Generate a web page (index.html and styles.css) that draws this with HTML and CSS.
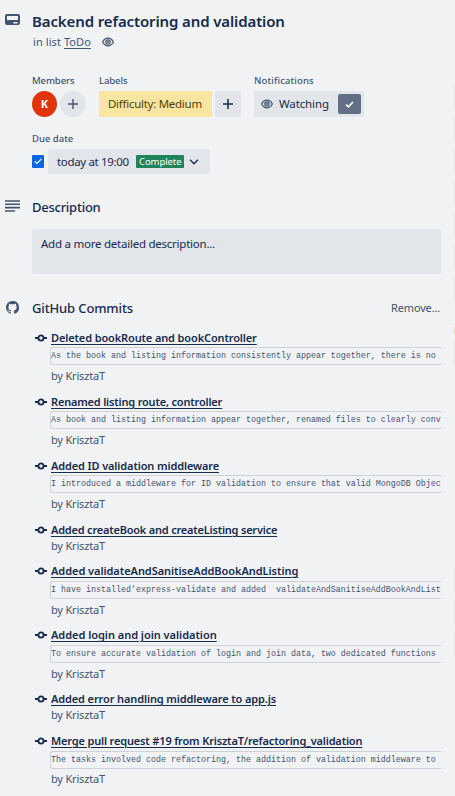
FILE: index.html
```html
<!DOCTYPE html>
<html lang="en">
<head>
<meta charset="utf-8">
<title>Backend refactoring and validation</title>
<link rel="stylesheet" href="styles.css">
</head>
<body>
<svg class="defs" width="0" height="0">
<symbol id="eye" viewBox="0 0 12 10"><path d="M.6 5C3.2-.1 8.8-.1 11.4 5 8.8 10.1 3.2 10.1.6 5Z"/><circle cx="6" cy="5" r="2.2"/><circle cx="6" cy="5" r=".4"/></symbol>
<symbol id="commit" viewBox="0 0 12 8"><path d="M0 4h3.200M8.800 4H12"/><circle cx="6" cy="4" r="2.600"/></symbol>
<symbol id="plus" viewBox="0 0 12 12"><path d="M6 1v10M1 6h10"/></symbol>
</svg>
<main class="card">
<header class="section head">
<svg class="icon" width="16" height="12" viewBox="0 0 16 12"><path fill="#44546f" fill-rule="evenodd" d="M2 0h11a2 2 0 0 1 2 2v7a2 2 0 0 1-2 2H2a2 2 0 0 1-2-2V2a2 2 0 0 1 2-2Zm0 2v4h11V2ZM8.500 8v1.500h4V8Z"/></svg>
<div><h1><span>Backend refactoring and validation</span></h1>
<div class="list"><span class="inlist">in list <u>ToDo</u></span><svg class="line" width="12" height="10"><use href="#eye"/></svg></div></div>
</header>
<div class="fields">
<div class="field members"><h3>Members</h3><div class="row"><span class="avatar">K</span><span class="round"><svg class="line" width="12" height="12"><use href="#plus"/></svg></span></div></div>
<div class="field labels"><h3>Labels</h3><div class="row"><span class="label"><span>Difficulty: Medium</span></span><span class="add"><svg class="line dark" width="12" height="12"><use href="#plus"/></svg></span></div></div>
<div class="field"><h3 class="notif">Notifications</h3><div class="watch"><svg class="line" width="12" height="10"><use href="#eye"/></svg><span class="watching">Watching</span><span class="on"><svg width="9" height="7" viewBox="0 0 9 7"><path d="M1 3.500l2.300 2.300L8 1" fill="none" stroke="#fff" stroke-width="1.600"/></svg></span></div></div>
</div>
<div class="due"><h3 class="duelabel">Due date</h3><div class="duerow"><span class="check"><svg width="8" height="7" viewBox="0 0 8 7"><path d="M.7 3.300l2.200 2.200L7.400 1" fill="none" stroke="#fff" stroke-width="1.100"/></svg></span><div class="date"><span class="time">today at 19:00</span><span class="done"><span>Complete</span></span><svg width="10" height="6" viewBox="0 0 10 6"><path d="M1 .8l4 4 4-4" fill="none" stroke="#172b4d" stroke-width="1.300"/></svg></div></div></div>
<section class="section desc">
<svg class="icon" width="15" height="12" viewBox="0 0 15 12"><path d="M0 1h15M0 4.300h15M0 7.600h15M0 11h10" stroke="#44546f" stroke-width="1.600"/></svg>
<div><h2 class="desctitle"><span>Description</span></h2><div class="box"><span>Add a more detailed description...</span></div></div>
</section>
<section class="section github">
<svg class="icon" width="13" height="13" viewBox="0 0 16 16"><path fill="#44546f" d="M8 0C3.580 0 0 3.580 0 8c0 3.540 2.290 6.530 5.470 7.590.4.070.55-.17.55-.38 0-.19-.01-.82-.01-1.490-2.010.37-2.530-.49-2.690-.94-.09-.23-.48-.94-.82-1.130-.28-.15-.68-.52-.01-.53.63-.01 1.080.58 1.230.82.72 1.210 1.870.87 2.330.66.070-.52.28-.87.51-1.070-1.780-.2-3.640-.89-3.640-3.950 0-.87.31-1.590.82-2.150-.08-.2-.36-1.020.08-2.120 0 0 .67-.21 2.200.82a7.600 7.600 0 0 1 4 0c1.530-1.040 2.200-.82 2.200-.82.44 1.100.16 1.920.08 2.120.51.56.82 1.270.82 2.150 0 3.070-1.870 3.750-3.650 3.950.29.25.54.73.54 1.480 0 1.070-.01 1.930-.01 2.200 0 .21.15.46.55.38A8 8 0 0 0 8 0Z"/></svg>
<div class="ghhead"><h2 class="ghtitle"><span>GitHub Commits</span></h2><span class="remove">Remove...</span></div>
</section>
<ul class="commits">
<li><svg class="node" width="12" height="8"><use href="#commit"/></svg><div><a class="c1">Deleted bookRoute and bookController</a><pre>As the book and listing information consistently appear together, there is no </pre><p><span>by KrisztaT</span></p></div></li>
<li><svg class="node" width="12" height="8"><use href="#commit"/></svg><div><a class="c2">Renamed listing route, controller</a><pre>As book and listing information appear together, renamed files to clearly conv</pre><p><span>by KrisztaT</span></p></div></li>
<li><svg class="node" width="12" height="8"><use href="#commit"/></svg><div><a class="c3">Added ID validation middleware</a><pre>I introduced a middleware for ID validation to ensure that valid MongoDB Objec</pre><p><span>by KrisztaT</span></p></div></li>
<li class="short"><svg class="node" width="12" height="8"><use href="#commit"/></svg><div><a class="c4">Added createBook and createListing service</a><p><span>by KrisztaT</span></p></div></li>
<li class="spaced"><svg class="node" width="12" height="8"><use href="#commit"/></svg><div><a class="c5">Added validateAndSanitiseAddBookAndListing</a><pre>I have installed'express-validate and added  validateAndSanitiseAddBookAndList</pre><p><span>by KrisztaT</span></p></div></li>
<li class="spaced"><svg class="node" width="12" height="8"><use href="#commit"/></svg><div><a class="c6">Added login and join validation</a><pre>To ensure accurate validation of login and join data, two dedicated functions </pre><p><span>by KrisztaT</span></p></div></li>
<li class="short tall"><svg class="node" width="12" height="8"><use href="#commit"/></svg><div><a class="c7">Added error handling middleware to app.js</a><p><span>by KrisztaT</span></p></div></li>
<li class="spaced last"><svg class="node" width="12" height="8"><use href="#commit"/></svg><div><a class="c8">Merge pull request #19 from KrisztaT/refactoring_validation</a><pre>The tasks involved code refactoring, the addition of validation middleware to </pre><p><span>by KrisztaT</span></p></div></li>
</ul>
</main>
<aside class="edge"><i></i><i></i><i></i><i></i><i></i><i></i><i></i><b></b><i></i><i class="low"></i><i></i><i></i></aside>
</body>
</html>
```

FILE: styles.css
```css
* { box-sizing: border-box; margin: 0; padding: 0; }
body { width: 455px; height: 796px; overflow: hidden; position: relative; background: #f1f2f4; color: #172b4d; font: 11.5px/16px "Noto Sans", "Open Sans", sans-serif; white-space: nowrap; }
svg { display: block; flex: none; }
.defs { position: absolute; }
.line { fill: none; stroke: #44546f; stroke-width: 1.2; }
.dark { stroke: #172b4d; stroke-width: 1.5; }
.round .line { stroke-width: 1.4; }
.card { padding: 11px 14px 0 5px; }
.section { display: grid; grid-template-columns: 27px 1fr; }
.icon { margin-top: 3px; }
.head { height: 64px; }
h1 { font-size: 15px; line-height: 20px; font-weight: 600; letter-spacing: -.12px; }
h2 { font-size: 13px; line-height: 20px; font-weight: 500; }
h3 { font-size: 9.5px; line-height: 12px; font-weight: 500; color: #44546f; letter-spacing: -.1px; }
.notif { letter-spacing: .14px; }
.list { display: flex; align-items: center; gap: 11px; color: #44546f; margin: 3px 0 0 1px; font-size: 11px; }
.inlist { letter-spacing: .08px; }
u { text-underline-offset: 2px; }
.fields { display: flex; margin-left: 27px; height: 58px; }
.field h3 { margin-bottom: 4px; }
.members { width: 67px; }
.labels { width: 155px; }
.row { display: flex; gap: 3px; }
.avatar, .round { width: 26px; height: 26px; border-radius: 50%; display: grid; place-items: center; background: #e2e5ea; }
.avatar { width: 25px; background: #de350b; color: #fff; font-weight: 700; font-size: 11px; }
.label { width: 113px; height: 26px; padding-left: 9px; line-height: 26px; background: #f8e6a0; color: #533f04; border-radius: 2px; letter-spacing: -.27px; }
.add { width: 26px; height: 26px; border-radius: 2px; background: #e2e5ea; display: grid; place-items: center; }
.watch { width: 110px; height: 26px; display: flex; align-items: center; background: #e2e5ea; border-radius: 2px; padding: 0 3px 0 7px; }
.watching { margin-left: 6px; letter-spacing: -.12px; }
.on { width: 23px; height: 20px; display: grid; place-items: center; border-radius: 2px; background: #626f86; margin-left: auto; }
.due { margin-left: 27px; height: 65px; }
.duelabel { letter-spacing: 0; }
.duerow { display: flex; align-items: center; gap: 4px; margin-top: 4px; }
.check { width: 12px; height: 13px; border-radius: 1px; background: #0c66e4; display: grid; place-items: center; }
.date { width: 162px; height: 25px; display: flex; align-items: center; background: #e2e5ea; border-radius: 2px; padding-left: 9px; }
.time { width: 79px; letter-spacing: -.34px; }
.done { width: 48px; height: 13px; line-height: 14px; background: #1f845a; color: #fff; border-radius: 1px; padding-left: 3px; font-size: 9.5px; margin-right: 5px; letter-spacing: -.08px; }
.desc { height: 100px; }
.desctitle { height: 20px; line-height: 18px; letter-spacing: -.26px; }
.desc .icon { margin-top: 2px; }
.box { height: 45px; margin-top: 11px; padding: 7px 9px; background: #e2e5ea; border-radius: 2px; letter-spacing: -.24px; }
.github { height: 32px; }
.github .icon { margin-left: 1px; }
.ghhead { display: flex; justify-content: space-between; align-items: center; height: 20px; }
.ghtitle { letter-spacing: -.14px; }
.remove { color: #44546f; margin-right: 1px; font-size: 11px; letter-spacing: -.16px; }
.commits { list-style: none; margin-left: 30px; }
li { height: 64px; display: grid; grid-template-columns: 15px 1fr; }
.short { height: 41px; }
.tall { height: 42px; }
.node { margin-top: 4px; fill: none; stroke: #172b4d; stroke-width: 1.8; }
li > div { min-width: 0; }
a { display: block; width: max-content; height: 16px; margin-left: 1px; font-weight: 600; font-size: 11px; text-decoration: underline; text-underline-offset: 2px; text-decoration-thickness: 1px; }
.c1 { letter-spacing: -.13px; }
.c2 { letter-spacing: -.19px; }
.c3 { letter-spacing: -.13px; }
.c4 { letter-spacing: -.21px; }
.c5 { letter-spacing: -.05px; }
.c6 { letter-spacing: -.03px; }
.c7 { letter-spacing: -.12px; }
.c8 { letter-spacing: -.17px; }
pre { height: 18px; margin-top: 1px; margin-bottom: 3px; border: 1px solid #cdd1d8; border-right: 0; border-radius: 3px 0 0 3px; overflow: hidden; font: 8.34px/17px "Liberation Mono", monospace; color: #44546f; }
.spaced pre { margin-top: 2px; }
.last pre { margin-bottom: 2px; }
p { margin-left: 1px; font-size: 11px; color: #44546f; letter-spacing: -.18px; }
.edge { position: absolute; right: 0; top: 85px; width: 1px; display: flex; flex-direction: column; gap: 8px; }
.edge i { height: 24px; background: #e3e5e9; }
.edge b { height: 7px; margin-top: 18px; background: #f8d9ae; }
.edge .low { margin-top: 194px; }
```
